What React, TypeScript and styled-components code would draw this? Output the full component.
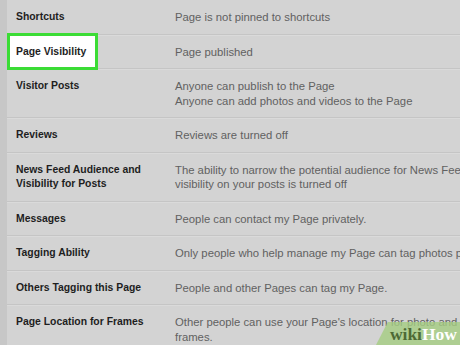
import styled, { createGlobalStyle } from "styled-components";

interface Setting {
  label: string[];
  value: string[];
  highlight?: boolean;
}

const SETTINGS: Setting[] = [
  { label: ["Shortcuts"], value: ["Page is not pinned to shortcuts"] },
  { label: ["Page Visibility"], value: ["Page published"], highlight: true },
  {
    label: ["Visitor Posts"],
    value: [
      "Anyone can publish to the Page",
      "Anyone can add photos and videos to the Page"
    ]
  },
  { label: ["Reviews"], value: ["Reviews are turned off"] },
  {
    label: ["News Feed Audience and", "Visibility for Posts"],
    value: [
      "The ability to narrow the potential audience for News Feed and",
      "visibility on your posts is turned off"
    ]
  },
  { label: ["Messages"], value: ["People can contact my Page privately."] },
  {
    label: ["Tagging Ability"],
    value: ["Only people who help manage my Page can tag photos posted on it."]
  },
  {
    label: ["Others Tagging this Page"],
    value: ["People and other Pages can tag my Page."]
  },
  {
    label: ["Page Location for Frames"],
    value: [
      "Other people can use your Page's location for photo and video",
      "frames."
    ]
  }
];

export default function App() {
  return (
    <>
      <GlobalStyle />
      <Screen>
        <Panel>
          {SETTINGS.map((s) => (
            <Row key={s.label.join(" ")}>
              <Label $highlight={!!s.highlight}>
                {s.label.map((line) => (
                  <Line key={line}>{line}</Line>
                ))}
              </Label>
              <Value>
                {s.value.map((line) => (
                  <Line key={line}>{line}</Line>
                ))}
              </Value>
            </Row>
          ))}
        </Panel>
        <Watermark>
          <WikiText>
            <Wiki>wiki</Wiki>How
          </WikiText>
        </Watermark>
      </Screen>
    </>
  );
}

const GlobalStyle = createGlobalStyle`
  html, body {
    margin: 0;
    padding: 0;
    overflow: hidden;
    background: #c7c7c7;
  }
`;

const Screen = styled.div`
  position: relative;
  width: 460px;
  height: 345px;
  overflow: hidden;
  padding-left: 7px;
  box-sizing: border-box;
  font-family: "Liberation Sans", Arial, sans-serif;
`;

const Panel = styled.div`
  background: #d3d3d3;
  height: 100%;
  width: 700px;
`;

const Row = styled.div`
  display: grid;
  grid-template-columns: 159px 1fr;
  padding: 10px 0 9px 9px;
  line-height: 14.5px;
  border-bottom: 1px solid #c5c5c5;
  box-shadow: 0 1px 0 #dadada;
`;

const Label = styled.div<{ $highlight: boolean }>`
  font-size: 10.4px;
  font-weight: bold;
  color: #1e1e1e;
  position: relative;
  z-index: 0;
  align-self: start;
  justify-self: start;

  ${(p) =>
    p.$highlight &&
    `
    &::before {
      content: "";
      position: absolute;
      top: -12px;
      bottom: -11px;
      left: -9px;
      right: -12px;
      background: #ffffff;
      border: 3.5px solid #3bdc35;
      z-index: -1;
    }
  `}
`;

const Value = styled.div`
  font-size: 11.3px;
  color: #616161;
`;

const Line = styled.div`
  white-space: nowrap;
`;

const Watermark = styled.div`
  position: absolute;
  right: 0;
  bottom: 0;
  width: 84px;
  height: 23px;
  background: rgba(165, 205, 130, 0.8);
  clip-path: polygon(14% 0, 100% 0, 100% 100%, 0 100%);
  display: flex;
  align-items: flex-end;
  justify-content: flex-end;
  padding: 0 3px 2px 0;
  box-sizing: border-box;
`;

const WikiText = styled.div`
  font-family: "Liberation Serif", "DejaVu Serif", serif;
  font-weight: bold;
  font-size: 17.5px;
  line-height: 18px;
  color: #ffffff;
`;

const Wiki = styled.span`
  color: #4d6a35;
`;
